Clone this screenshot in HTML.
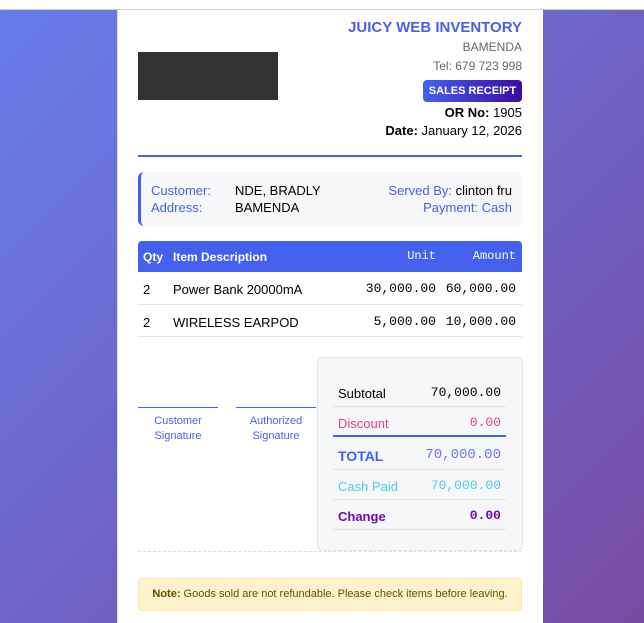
<!DOCTYPE html>
<html><head><meta charset="utf-8"><style>
*{box-sizing:border-box;margin:0;padding:0}
html,body{width:644px;height:623px;overflow:hidden}
body{font-family:"Liberation Sans",sans-serif;background:linear-gradient(135deg,#667eea 0%,#764ba2 100%);position:relative}
.top{position:absolute;left:0;top:0;width:644px;height:10px;background:#fff;border-bottom:1px solid #ccc}
.card{position:absolute;left:117px;top:10px;width:426px;height:613px;background:#fff;border-left:1px solid #ddd}
.a{position:absolute}
.r{text-align:right;right:21px}
.mono{font-family:"Liberation Mono",monospace}
</style></head><body>
<div class="top"></div>
<div class="card">
<div class="a" style="left:20px;top:42px;width:140px;height:48px;background:#333"></div>
<div class="a r" style="top:9px;font-size:15px;font-weight:bold;color:#4a5fe6">JUICY WEB INVENTORY</div>
<div class="a r" style="top:30px;font-size:12px;color:#666">BAMENDA</div>
<div class="a r" style="top:49px;font-size:12px;color:#666">Tel: 679 723 998</div>
<div class="a" style="left:305px;top:70px;width:99px;height:22px;border-radius:4px;background:linear-gradient(90deg,#4361ee,#3a0ca3);color:#fff;font-size:11px;font-weight:bold;text-align:center;line-height:22px">SALES RECEIPT</div>
<div class="a r" style="top:95px;font-size:13px;color:#000"><b>OR No:</b> 1905</div>
<div class="a r" style="top:113px;font-size:13px;color:#000"><b>Date:</b> January 12, 2026</div>
<div class="a" style="left:20px;top:145px;width:384px;height:2px;background:#4361ee"></div>
<div class="a" style="left:20px;top:162px;width:384px;height:54px;background:#f6f7f9;border-left:3px solid #4361ee;border-radius:6px;font-size:13px">
 <div class="a" style="left:10px;top:11px;color:#4a5fe6">Customer:</div>
 <div class="a" style="left:10px;top:28px;color:#4a5fe6">Address:</div>
 <div class="a" style="left:94px;top:11px">NDE, BRADLY</div>
 <div class="a" style="left:94px;top:28px">BAMENDA</div>
 <div class="a" style="right:10px;top:11px;color:#4a5fe6">Served By: <span style="color:#000">clinton fru</span></div>
 <div class="a" style="right:10px;top:28px;color:#4a5fe6">Payment: Cash</div>
</div>
<div class="a" style="left:20px;top:231px;width:384px;height:31px;background:#4361ee;border-radius:4px 4px 0 0;color:#fff;font-size:12px">
 <div class="a" style="left:5px;top:9px;font-weight:bold">Qty</div>
 <div class="a" style="left:35px;top:9px;font-weight:bold">Item Description</div>
 <div class="a mono" style="right:86px;top:8px">Unit</div>
 <div class="a mono" style="right:6px;top:8px">Amount</div>
</div>
<div class="a" style="left:20px;top:262px;width:384px;height:33px;border-bottom:1px solid #e5e5e5;font-size:13px">
 <div class="a" style="left:5px;top:10px">2</div><div class="a" style="left:35px;top:10px">Power Bank 20000mA</div>
 <div class="a mono" style="right:86px;top:9px">30,000.00</div><div class="a mono" style="right:6px;top:9px">60,000.00</div>
</div>
<div class="a" style="left:20px;top:295px;width:384px;height:32px;border-bottom:1px solid #e5e5e5;font-size:13px">
 <div class="a" style="left:5px;top:10px">2</div><div class="a" style="left:35px;top:10px">WIRELESS EARPOD</div>
 <div class="a mono" style="right:86px;top:9px">5,000.00</div><div class="a mono" style="right:6px;top:9px">10,000.00</div>
</div>
<div class="a" style="left:20px;top:397px;width:80px;border-top:1px solid #4361ee;text-align:center;font-size:11px;color:#4a5fe6;padding-top:6px;line-height:15px">Customer<br>Signature</div>
<div class="a" style="left:118px;top:397px;width:80px;border-top:1px solid #4361ee;text-align:center;font-size:11px;color:#4a5fe6;padding-top:6px;line-height:15px">Authorized<br>Signature</div>
<div class="a" style="left:199px;top:347px;width:206px;height:194px;background:#f6f7f9;border:1px solid #e3e5e8;border-radius:6px;font-size:13px">
 <div class="a" style="left:15px;top:19px;width:173px;height:30px;border-bottom:1px solid #e3e3e3"><span class="a" style="left:5px;top:9px">Subtotal</span><span class="a mono" style="right:5px;top:8px">70,000.00</span></div>
 <div class="a" style="left:15px;top:49px;width:173px;height:30px;border-bottom:2px solid #4361ee;color:#e83e8c"><span class="a" style="left:5px;top:9px">Discount</span><span class="a mono" style="right:5px;top:8px">0.00</span></div>
 <div class="a" style="left:15px;top:81px;width:173px;height:31px;border-bottom:1px solid #e3e3e3;color:#4361ee"><span class="a" style="left:5px;top:9px;font-weight:bold;font-size:14px">TOTAL</span><span class="a mono" style="right:5px;top:8px;font-size:14px;color:#6a7ae6">70,000.00</span></div>
 <div class="a" style="left:15px;top:112px;width:173px;height:30px;border-bottom:1px solid #e3e3e3;color:#4cc9f0"><span class="a" style="left:5px;top:9px">Cash Paid</span><span class="a mono" style="right:5px;top:8px">70,000.00</span></div>
 <div class="a" style="left:15px;top:142px;width:173px;height:30px;border-bottom:1px solid #e3e3e3;color:#7209b7"><span class="a" style="left:5px;top:9px;font-weight:bold">Change</span><span class="a mono" style="right:5px;top:8px;font-weight:bold">0.00</span></div>
</div>
<div class="a" style="left:20px;top:541px;width:384px;border-top:1px dashed #ddd"></div>
<div class="a" style="left:20px;top:568px;width:384px;height:33px;background:#fff3cd;border:1px solid #ffe69c;border-radius:4px;font-size:11px;color:#664d03;text-align:center;line-height:31px"><b>Note:</b> Goods sold are not refundable. Please check items before leaving.</div>
</div>
</body></html>
